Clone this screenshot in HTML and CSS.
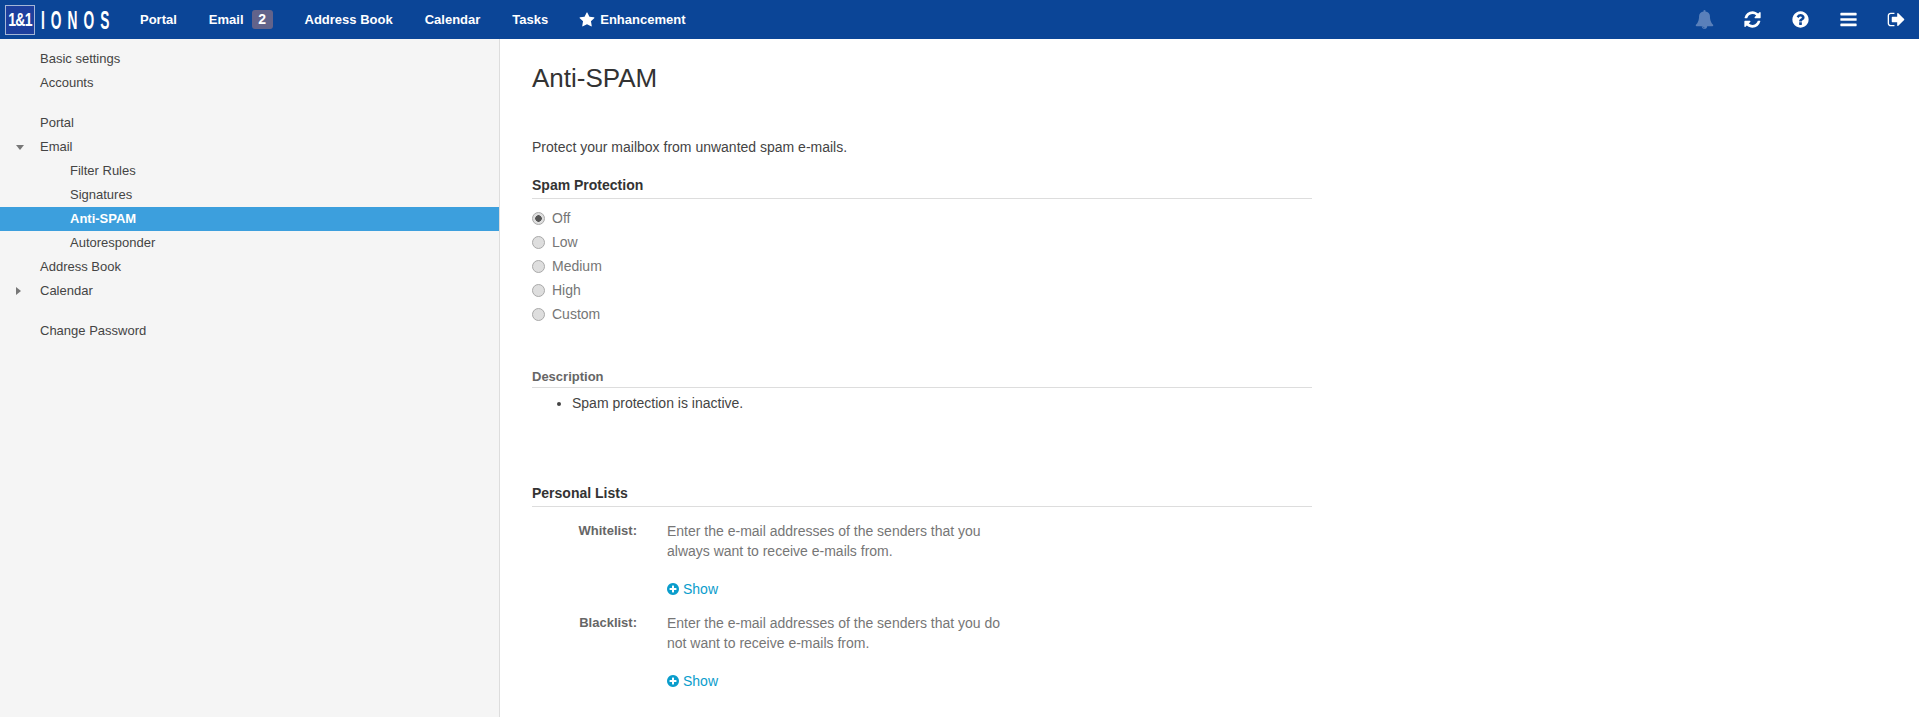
FILE: index.html
```html
<!DOCTYPE html>
<html lang="en">
<head>
    <meta charset="UTF-8">
    <meta name="viewport" content="width=device-width, initial-scale=1.0">
    <title>Anti-SPAM</title>
    <link rel="stylesheet" href="styles.css">
</head>
<body>
    <div class="app">
        <header class="topbar">
            <div class="logo">
                <span class="logo-box"><span class="logo-mark">1&amp;1</span></span>
                <span class="logo-name">IONOS</span>
            </div>
            <nav class="nav">
                <a class="nav-item">Portal</a>
                <a class="nav-item">Email<span class="badge">2</span></a>
                <a class="nav-item">Address Book</a>
                <a class="nav-item">Calendar</a>
                <a class="nav-item">Tasks</a>
                <a class="nav-item nav-star">
                    <svg class="star" viewBox="0 0 1792 1792"><path d="M1728 647q0 22-26 48l-363 354 86 500q1 7 1 20 0 21-10.500 35.500t-30.500 14.500q-19 0-40-12l-449-236-449 236q-22 12-40 12-21 0-31.500-14.500t-10.500-35.500q0-6 2-20l86-500-364-354q-25-27-25-48 0-37 56-46l502-73 225-455q19-41 49-41t49 41l225 455 502 73q56 9 56 46z"/></svg>
                    Enhancement
                </a>
            </nav>
            <div class="tools">
                <a class="tool tool-dim"><svg viewBox="0 0 1792 1792"><path d="M912 1696q0-16-16-16-59 0-101.500-42.500t-42.500-101.500q0-16-16-16t-16 16q0 73 51.500 124.500t124.500 51.500q16 0 16-16zm816-288q0 52-38 90t-90 38h-448q0 106-75 181t-181 75-181-75-75-181h-448q-52 0-90-38t-38-90q50-42 91-88t85-119.500 74.500-158.500 50-206 19.500-260q0-152 117-282.500t307-158.500q-8-19-8-39 0-40 28-68t68-28 68 28 28 68q0 20-8 39 190 28 307 158.500t117 282.500q0 139 19.500 260t50 206 74.500 158.500 85 119.500 91 88z"/></svg></a>
                <a class="tool"><svg viewBox="0 0 1792 1792"><path d="M1639 1056q0 5-1 7-64 268-268 434.500t-478 166.500q-146 0-282.500-55t-243.500-157l-129 129q-19 19-45 19t-45-19-19-45v-448q0-26 19-45t45-19h448q26 0 45 19t19 45-19 45l-137 137q71 66 161 102t187 36q134 0 250-65t186-179q11-17 53-117 8-23 30-23h192q13 0 22.500 9.500t9.500 22.500zm25-800v448q0 26-19 45t-45 19h-448q-26 0-45-19t-19-45 19-45l138-138q-148-137-349-137-134 0-250 65t-186 179q-11 17-53 117-8 23-30 23h-199q-13 0-22.500-9.500t-9.500-22.500v-7q65-268 270-434.500t480-166.500q146 0 284 55.500t245 156.500l130-129q19-19 45-19t45 19 19 45z"/></svg></a>
                <a class="tool"><svg viewBox="0 0 1792 1792"><path d="M1024 1376v-192q0-14-9-23t-23-9h-192q-14 0-23 9t-9 23v192q0 14 9 23t23 9h192q14 0 23-9t9-23zm256-672q0-88-55.500-163t-138.500-116-170-41q-243 0-371 213-15 24 8 42l132 100q7 6 19 6 16 0 25-12 53-68 86-92 34-24 86-24 48 0 85.500 26t37.500 59q0 38-20 61t-68 45q-63 28-115.500 86.500t-52.500 125.500v36q0 14 9 23t23 9h192q14 0 23-9t9-23q0-19 21.500-49.500t54.500-49.500q32-18 49-28.500t46-35 44.500-48 28-60.500 12.500-81zm384 192q0 209-103 385.500t-279.500 279.500-385.500 103-385.500-103-279.500-279.500-103-385.500 103-385.500 279.500-279.500 385.500-103 385.500 103 279.500 279.500 103 385.500z"/></svg></a>
                <a class="tool"><svg viewBox="0 0 1792 1792"><path d="M1664 1344v128q0 26-19 45t-45 19h-1408q-26 0-45-19t-19-45v-128q0-26 19-45t45-19h1408q26 0 45 19t19 45zm0-512v128q0 26-19 45t-45 19h-1408q-26 0-45-19t-19-45v-128q0-26 19-45t45-19h1408q26 0 45 19t19 45zm0-512v128q0 26-19 45t-45 19h-1408q-26 0-45-19t-19-45v-128q0-26 19-45t45-19h1408q26 0 45 19t19 45z"/></svg></a>
                <a class="tool"><svg viewBox="0 0 1792 1792"><path d="M704 1440q0 4 1 20t.5 26.500-3 23.500-10 19.500-20.500 6.500h-320q-119 0-203.500-84.500t-84.500-203.500v-704q0-119 84.500-203.500t203.500-84.500h320q13 0 22.500 9.500t9.500 22.500q0 4 1 20t.5 26.500-3 23.500-10 19.500-20.500 6.500h-320q-66 0-113 47t-47 113v704q0 66 47 113t113 47h312l11.500 1 11.500 3 8 5.500 7 9 2 13.500zm928-544q0 26-19 45l-544 544q-19 19-45 19t-45-19-19-45v-288h-448q-26 0-45-19t-19-45v-384q0-26 19-45t45-19h448v-288q0-26 19-45t45-19 45 19l544 544q19 19 19 45z"/></svg></a>
            </div>
        </header>

        <div class="body">
            <aside class="sidebar">
                <ul class="tree">
                    <li class="row">Basic settings</li>
                    <li class="row">Accounts</li>
                </ul>
                <ul class="tree">
                    <li class="row">Portal</li>
                    <li class="row has-caret"><span class="caret caret-down"></span>Email</li>
                    <li class="row sub">Filter Rules</li>
                    <li class="row sub">Signatures</li>
                    <li class="row sub selected">Anti-SPAM</li>
                    <li class="row sub">Autoresponder</li>
                    <li class="row">Address Book</li>
                    <li class="row has-caret"><span class="caret caret-right"></span>Calendar</li>
                </ul>
                <ul class="tree">
                    <li class="row">Change Password</li>
                </ul>
            </aside>

            <main class="content">
                <h1>Anti-SPAM</h1>
                <p class="intro">Protect your mailbox from unwanted spam e-mails.</p>

                <h2 class="section-title">Spam Protection</h2>
                <div class="radios">
                    <label class="radio"><input type="radio" name="level" checked> Off</label>
                    <label class="radio"><input type="radio" name="level"> Low</label>
                    <label class="radio"><input type="radio" name="level"> Medium</label>
                    <label class="radio"><input type="radio" name="level"> High</label>
                    <label class="radio"><input type="radio" name="level"> Custom</label>
                </div>

                <h2 class="section-title desc-title">Description</h2>
                <ul class="desc">
                    <li>Spam protection is inactive.</li>
                </ul>

                <h2 class="section-title lists-title">Personal Lists</h2>
                <div class="list-row">
                    <div class="list-label">Whitelist:</div>
                    <div class="list-text">
                        <p>Enter the e-mail addresses of the senders that you always want to receive e-mails from.</p>
                        <a class="show">
                            <svg viewBox="0 0 1792 1792"><path d="M1344 960v-128q0-26-19-45t-45-19h-256v-256q0-26-19-45t-45-19h-128q-26 0-45 19t-19 45v256h-256q-26 0-45 19t-19 45v128q0 26 19 45t45 19h256v256q0 26 19 45t45 19h128q26 0 45-19t19-45v-256h256q26 0 45-19t19-45zm320-64q0 209-103 385.500t-279.500 279.500-385.500 103-385.500-103-279.500-279.500-103-385.500 103-385.500 279.500-279.500 385.500-103 385.500 103 279.500 279.500 103 385.500z"/></svg>
                            Show
                        </a>
                    </div>
                </div>
                <div class="list-row">
                    <div class="list-label">Blacklist:</div>
                    <div class="list-text">
                        <p>Enter the e-mail addresses of the senders that you do not want to receive e-mails from.</p>
                        <a class="show">
                            <svg viewBox="0 0 1792 1792"><path d="M1344 960v-128q0-26-19-45t-45-19h-256v-256q0-26-19-45t-45-19h-128q-26 0-45 19t-19 45v256h-256q-26 0-45 19t-19 45v128q0 26 19 45t45 19h256v256q0 26 19 45t45 19h128q26 0 45-19t19-45v-256h256q26 0 45-19t19-45zm320-64q0 209-103 385.500t-279.500 279.500-385.500 103-385.500-103-279.500-279.500-103-385.500 103-385.500 279.500-279.500 385.500-103 385.500 103 279.500 279.500 103 385.500z"/></svg>
                            Show
                        </a>
                    </div>
                </div>
            </main>
        </div>
    </div>
</body>
</html>
```

FILE: styles.css
```css
*{
    padding: 0;
    margin: 0;
    box-sizing: border-box;
}
html, body{
    height: 100%;
    overflow: hidden;
}
body{
    font-family: "Liberation Sans", Arial, sans-serif;
    font-size: 14px;
    line-height: 20px;
    color: #444;
    background: #fff;
}
.app{
    height: 100vh;
    display: flex;
    flex-direction: column;
}

/* top bar */
.topbar{
    height: 39px;
    flex: none;
    display: flex;
    align-items: center;
    background: #0b4597;
    color: #fff;
}
.logo{
    width: 124px;
    flex: none;
    display: flex;
    align-items: center;
    padding-left: 5px;
}
.logo-box{
    width: 30px;
    height: 30px;
    display: flex;
    align-items: center;
    justify-content: center;
    border: 1px solid #a4b6d6;
    background: #1d3f9e;
}
.logo-mark{
    font-size: 18px;
    font-weight: bold;
    letter-spacing: -1px;
    white-space: nowrap;
    transform: scaleX(.78);
}
.logo-name{
    width: 70px;
    margin-left: 6px;
    font-size: 25px;
    font-weight: bold;
    line-height: 30px;
    letter-spacing: 11px;
    white-space: nowrap;
    transform: scaleX(.55);
    transform-origin: left center;
}
.nav{
    display: flex;
    flex: 1;
    font-size: 13px;
    font-weight: bold;
}
.nav-item{
    display: flex;
    align-items: center;
    padding: 0 16px;
}
.badge{
    width: 21px;
    height: 19px;
    margin-left: 8px;
    border-radius: 3px;
    background: #63638a;
    font-size: 14px;
    line-height: 19px;
    text-align: center;
}
.nav-star{
    gap: 5px;
    margin-left: -1px;
}
.star{
    width: 16px;
    height: 16px;
    fill: #fff;
}
.tools{
    display: flex;
    flex: none;
}
.tool{
    width: 48px;
    height: 39px;
    display: flex;
    align-items: center;
    justify-content: center;
    padding-left: 2px;
}
.tool svg{
    width: 19px;
    height: 19px;
    fill: #fff;
}
.tool-dim svg{
    fill: #5a80ba;
}

/* left tree */
.body{
    flex: 1;
    display: flex;
    min-height: 0;
}
.sidebar{
    width: 500px;
    flex: none;
    padding-top: 8px;
    background: #f5f5f5;
    border-right: 1px solid #ddd;
    font-size: 13px;
    color: #444;
}
.tree{
    list-style: none;
    margin-bottom: 16px;
}
.row{
    height: 24px;
    line-height: 24px;
    padding-left: 40px;
}
.has-caret{
    display: flex;
    align-items: center;
    padding-left: 16px;
}
.caret{
    width: 24px;
    flex: none;
}
.caret::before{
    content: "";
    display: block;
    width: 0;
    height: 0;
}
.caret-down::before{
    border-top: 5px solid #777;
    border-left: 4px solid transparent;
    border-right: 4px solid transparent;
}
.caret-right::before{
    border-left: 5px solid #777;
    border-top: 4px solid transparent;
    border-bottom: 4px solid transparent;
}
.sub{
    padding-left: 70px;
}
.selected{
    background: #3c9fdd;
    color: #fff;
    font-weight: bold;
}

/* settings pane */
.content{
    flex: 1;
    padding: 19px 0 0 32px;
    max-width: 812px;
}
h1{
    font-size: 26px;
    font-weight: normal;
    line-height: 40px;
    margin-bottom: 39px;
    color: #333;
}
.intro{
    margin-bottom: 18px;
}
.section-title{
    font-size: 14px;
    font-weight: bold;
    line-height: 20px;
    padding-bottom: 3px;
    border-bottom: 1px solid #ddd;
    color: #333;
}
.radios{
    margin-top: 7px;
}
.radio{
    height: 24px;
    display: flex;
    align-items: center;
    gap: 7px;
    color: #767676;
}
.radio input{
    appearance: none;
    width: 13px;
    height: 13px;
    border: 1px solid #a9a9a9;
    border-radius: 50%;
    background: #dedede;
}
.radio input:checked{
    background: radial-gradient(circle, #555 0 3px, #dedede 3.5px);
}
.section-title.desc-title{
    margin-top: 41px;
    padding-bottom: 0;
    color: #666;
    font-size: 13px;
}
.desc{
    margin: 5px 0 0 40px;
}
.lists-title{
    margin-top: 70px;
}
.list-row{
    display: flex;
    gap: 30px;
    margin-top: 14px;
    margin-bottom: 14px;
    line-height: 20px;
}
.list-row + .list-row{
    margin-top: 0;
}
.list-label{
    width: 105px;
    flex: none;
    text-align: right;
    font-size: 13px;
    font-weight: bold;
    color: #666;
}
.list-text{
    width: 340px;
    color: #767676;
}
.show{
    display: flex;
    align-items: center;
    gap: 3px;
    margin: 18px 0 0 -1px;
    color: #0a9dcc;
}
.show svg{
    width: 14px;
    height: 14px;
    fill: #0a9dcc;
}
```
